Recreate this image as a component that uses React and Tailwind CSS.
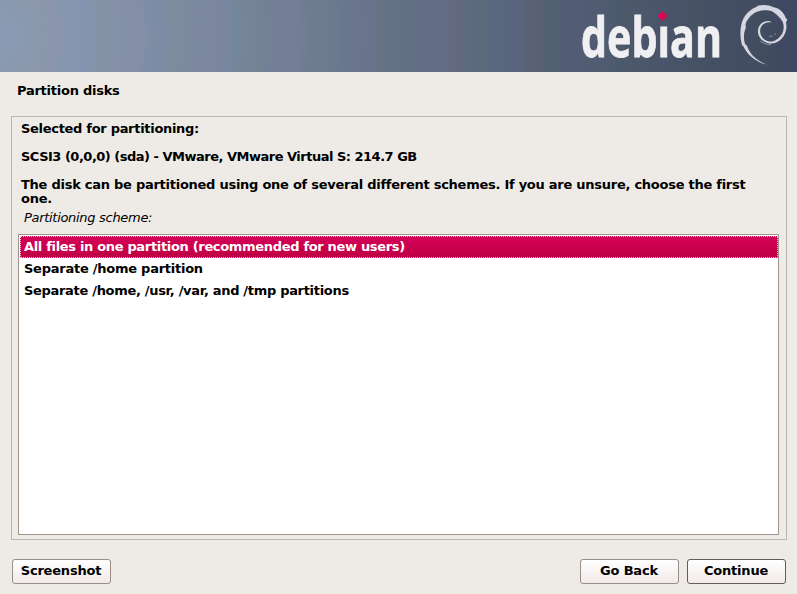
const HEADER =
  "bg-[linear-gradient(to_right,#8999b060_0px,#8192a660_150px,#73809960_300px,#5f6d8260_450px,#505c7160_600px,#3f486160_797px),radial-gradient(circle_at_0px_35px,#8b9cba_0px,#8b9bb2_20px,#8a99ac_38px,#9095ac_58px,#8496b0_68px,#8394b4_90px,#8393a5_102px,#868ea8_125px,#868ba6_144px,#7a8ba6_150px,#7b88a5_163px,#7b8c9a_172px,#7d8799_190px,#7c849f_197px,#7b839e_225px,#7287a0_232px,#738594_242px,#728191_264px,#747c96_272px,#757c96_300px,#6a7b8a_308px,#6a7a88_334px,#69758e_340px,#69728a_372px,#6c6f7e_378px,#617183_388px,#616f80_410px,#626c86_418px,#636b84_448px,#69697d_455px,#67687b_462px,#5c6b7b_467px,#5b6979_486px,#59677f_492px,#5a6480_520px,#5b6072_527px,#5c5f6f_541px,#50606f_547px,#505e6e_560px,#525c76_568px,#515b72_600px,#4a5a68_620px,#4d5669_645px,#48536b_670px,#465260_700px,#444d64_725px,#414e5c_760px,#3f4861_785px,#3f4861_800px)]";

const SCHEMES = [
  { label: "All files in one partition (recommended for new users)", tracking: "tracking-[-0.325px]" },
  { label: "Separate /home partition", tracking: "tracking-[-0.25px]" },
  { label: "Separate /home, /usr, /var, and /tmp partitions", tracking: "tracking-[-0.31px]" },
];

function Banner() {
  return (
    <header className={`h-[72px] w-full shrink-0 ${HEADER}`}>
      <svg className="ml-auto block h-[72px] w-[227px] overflow-visible" viewBox="570 0 227 72">
        <text
          transform="translate(581 56.5) scale(0.75 1)"
          className="fill-[#f0f0f3] stroke-[#f0f0f3] font-['Open_Sans',sans-serif] text-[56px] font-bold"
          strokeWidth="0.8"
          textLength="188"
          lengthAdjust="spacingAndGlyphs"
        >
          debıan
        </text>
        <path d="M662.5 11.5 L667 16 L662.5 20.5 L658 16 Z" fill="#d70751" stroke="#d70751" strokeWidth="0.8" strokeLinejoin="round" />
        <path
          fill="#d5d6df"
          d="M766.6 64.6 C757 62.5 747 55 743.5 46.5 L742 45 C740 38 739.8 29 742 22 C744.5 14.5 751 8.5 756.5 7 L757.5 5.8 C763 4.4 769 4.8 773 7 L778 8.5 C782 11 784.5 14 785.8 18 L787.3 19.5 L786 22.5 C787.4 29 785.5 34 781.8 38.5 C778 42.7 773 44.2 768.5 43.2 C761.5 41.5 757.4 36 758 30 C758.6 24.5 763.5 20.5 769 21 L773 22.7 C766 20.9 761.2 24.3 760.2 29.5 C759.5 35.5 763.5 40.5 769 41.4 C774 42.2 778.5 39 781.3 35 C784 31 784.3 26.5 782.8 22 L780 18 L776.5 14.6 L772.5 11.5 C768.5 9.8 763.5 10 759.5 11 C753 12.5 747.5 18 745.6 24 L745.8 28 C743.4 33 743.6 39 744.8 43.5 L747 46 C750 54 756 60.5 766.6 64.6 Z"
        />
        <path d="M760 41 Q765 45 771 44.8 M769 36.3 L772.5 36 M774.5 34.5 L776 33.5" stroke="#a9adbb" strokeWidth="0.7" fill="none" />
      </svg>
    </header>
  );
}

function Button({ children, focused }) {
  return (
    <button
      className={`h-[25px] w-[99px] rounded-[3px] border bg-linear-to-b from-white to-[#f1eae8] pr-px pb-[2px] text-center font-bold tracking-[-0.2px] ${
        focused ? "border-[#625c58]" : "border-[#988f87]"
      }`}
    >
      {children}
    </button>
  );
}

export default function App() {
  return (
    <div className="flex h-[594px] w-[797px] flex-col overflow-hidden bg-[#eeebe7] font-['DejaVu_Sans',sans-serif] text-[13px] leading-[14px] text-black">
      <Banner />
      <h1 className="mt-3 ml-[17px] h-8 font-bold tracking-[-0.25px]">Partition disks</h1>
      <main className="mr-[10px] ml-[11px] flex h-[424px] flex-col border border-[#bab5af] px-[6px] pb-1">
        <div className="h-[98px] pt-[5px] pl-[3px] font-bold">
          <p className="tracking-[-0.3px]">Selected for partitioning:</p>
          <p className="mt-[14px] tracking-[-0.5px]">SCSI3 (0,0,0) (sda) - VMware, VMware Virtual S: 214.7 GB</p>
          <p className="mt-[14px] w-[740px] tracking-[-0.26px]">
            The disk can be partitioned using one of several different schemes. If you are unsure, choose the first
            <br />
            one.
          </p>
        </div>
        <p className="mt-[-4px] mb-[9px] pl-[6px] tracking-[-0.3px] italic">Partitioning scheme:</p>
        <ul className="mr-px flex-1 border border-[#9d958d] bg-white pt-px pl-px font-bold leading-[20px]">
          {SCHEMES.map(({ label, tracking }, i) => (
            <li
              key={label}
              className={`h-[22px] border border-dotted pl-[3px] ${tracking} ${
                i === 0
                  ? "border-[#f5c7d7] bg-linear-to-b from-[#d40057] to-[#bf0044] text-white"
                  : "border-transparent"
              }`}
            >
              {label}
            </li>
          ))}
        </ul>
      </main>
      <footer className="mt-[19px] mr-[11px] ml-3 flex gap-2">
        <Button>Screenshot</Button>
        <span className="flex-1" />
        <Button>Go Back</Button>
        <Button focused>Continue</Button>
      </footer>
    </div>
  );
}
